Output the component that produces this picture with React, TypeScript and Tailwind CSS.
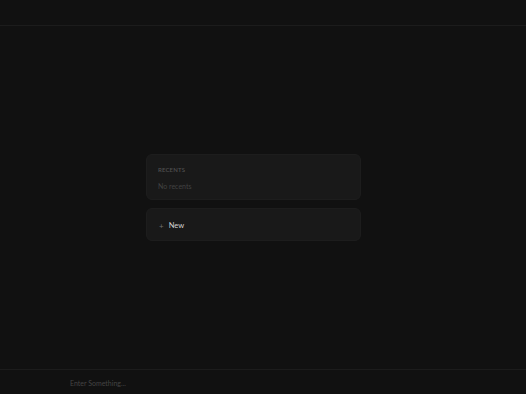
export default function App() {
  return (
    <div
      className="flex h-[394px] w-[526px] flex-col bg-[#111111] text-[#cccccc]"
      style={{ fontFamily: 'Lato, "Noto Sans", sans-serif' }}
    >
      <header className="h-[26px] shrink-0 border-b border-[#1c1c1c]" />

      <main className="flex flex-1 items-center justify-center pr-[19px]">
        <div className="flex w-[215px] flex-col gap-2">
          <div className="h-[46px] rounded-md border border-[#1d1d1d] bg-[#191919] px-[11px] pt-[10px]">
            <p className="text-[6px] font-semibold uppercase leading-[10px] tracking-wide text-[#4f4f4f]">Recents</p>
            <p className="mt-[6px] text-[7px] leading-[10px] text-[#424242]">No recents</p>
          </div>

          <button className="flex h-[33px] items-center gap-[5px] rounded-md border border-[#1d1d1d] bg-[#191919] px-3 pt-[2px] text-left">
            <span className="text-[8px] leading-none text-[#6f6f6f]">+</span>
            <span className="text-[7.5px] font-normal text-[#d4d4d4]">New</span>
          </button>
        </div>
      </main>

      <footer className="flex h-[25px] shrink-0 items-center border-t border-[#1c1c1c] pl-[70px] pt-[3px]">
        <input
          className="w-[300px] bg-transparent text-[7px] text-[#cccccc] outline-none placeholder:text-[#444444]"
          placeholder="Enter Something..."
        />
      </footer>
    </div>
  );
}
